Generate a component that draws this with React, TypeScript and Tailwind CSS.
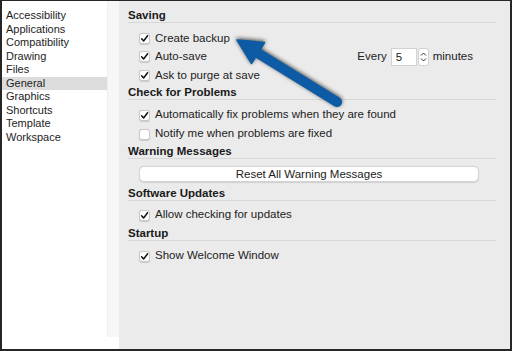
import React from 'react';

const categories = [
  'Accessibility',
  'Applications',
  'Compatibility',
  'Drawing',
  'Files',
  'General',
  'Graphics',
  'Shortcuts',
  'Template',
  'Workspace',
];

const Checkbox = ({ checked }: { checked: boolean }) => (
  <span className="w-[11px] h-[11px] shrink-0 rounded-[3px] bg-white border border-[#c9c9c9] shadow-[0_0.5px_1px_rgba(0,0,0,0.15)] flex items-center justify-center">
    {checked && (
      <svg width="9" height="9" viewBox="0 0 9 9">
        <path d="M1.6 4.8 L3.6 7 L7.6 1.8" fill="none" stroke="#111" strokeWidth="1.5" strokeLinecap="round" strokeLinejoin="round" />
      </svg>
    )}
  </span>
);

const Option = ({
  label,
  checked = true,
  tall = false,
  children,
}: {
  label: string;
  checked?: boolean;
  tall?: boolean;
  children?: React.ReactNode;
}) => (
  <div className={`${tall ? 'h-[19px]' : 'h-[18.5px]'} flex items-center pl-[11px] pr-[23px]`}>
    <Checkbox checked={checked} />
    <span className="ml-[5px] text-[11.5px] text-[#222]">{label}</span>
    {children}
  </div>
);

const Heading = ({ title, className = '' }: { title: string; className?: string }) => (
  <div className={`h-[15px] leading-[15px] text-[11.5px] font-bold text-[#1a1a1a] border-b border-[#d8d8d8] ${className}`}>
    {title}
  </div>
);

export default function App() {
  return (
    <div className="relative w-[512px] h-[351px] font-['Liberation_Sans',Arial,sans-serif]">
      <div className="w-full h-full border-x-2 border-b-2 border-t border-[#262626] flex bg-white">
        {/* Sidebar */}
        <div className="w-[117px] h-full flex bg-white">
          <div className="w-[105px] pt-[8px]">
            {categories.map((c) => (
              <div
                key={c}
                className={`h-[13.5px] leading-[13.5px] pl-[4px] text-[11px] text-[#1d1d1d] ${c === 'General' ? 'bg-[#dcdcdc]' : ''}`}
              >
                {c}
              </div>
            ))}
          </div>
          <div className="w-[12px] mb-[12px] bg-[#f7f7f7] border-l border-[#efefef]" />
        </div>

        {/* Main panel */}
        <div className="flex-1 h-full bg-[#ebebeb] pl-[9px] pr-[14px] pt-[7px]">
          <Heading title="Saving" />
          <div className="pt-[6px]">
            <Option label="Create backup" />
            <Option label="Auto-save">
              <div className="ml-auto flex items-center text-[11.5px] text-[#222]">
                <span>Every</span>
                <div className="ml-[4px] w-[26px] h-[18px] bg-white border border-[#d2d2d2] pl-[4px] leading-[16px]">5</div>
                <div className="ml-[1px] w-[11px] h-[18px] rounded-[3px] bg-white border border-[#d2d2d2] flex flex-col items-center justify-center gap-[2px]">
                  <svg width="7" height="4" viewBox="0 0 7 4">
                    <path d="M1 3.5 L3.5 1 L6 3.5" fill="none" stroke="#333" strokeWidth="1" />
                  </svg>
                  <svg width="7" height="4" viewBox="0 0 7 4">
                    <path d="M1 0.5 L3.5 3 L6 0.5" fill="none" stroke="#333" strokeWidth="1" />
                  </svg>
                </div>
                <span className="ml-[4px]">minutes</span>
              </div>
            </Option>
            <Option label="Ask to purge at save" />
          </div>

          <Heading title="Check for Problems" />
          <div className="pt-[6px]">
            <Option label="Automatically fix problems when they are found" tall />
            <Option label="Notify me when problems are fixed" checked={false} tall />
          </div>

          <Heading title="Warning Messages" />
          <div className="pt-[7px] pl-[11px] pr-[17px]">
            <button className="block w-full h-[16px] rounded-[5px] bg-white border border-[#d4d4d4] shadow-[0_0.5px_1px_rgba(0,0,0,0.12)] text-[11.5px] leading-[14px] text-[#222]">
              Reset All Warning Messages
            </button>
          </div>

          <Heading title="Software Updates" className="mt-[4px]" />
          <div className="pt-[5px]">
            <Option label="Allow checking for updates" tall />
          </div>

          <Heading title="Startup" className="mt-[1px]" />
          <div className="pt-[6px]">
            <Option label="Show Welcome Window" tall />
          </div>
        </div>
      </div>

      {/* Annotation arrow */}
      <svg
        className="absolute inset-0 pointer-events-none drop-shadow-[0_-1px_2px_rgba(0,0,0,0.7)]"
        width="512"
        height="351"
        viewBox="0 0 512 351"
      >
        <line x1="256" y1="52" x2="337" y2="102" stroke="#0d5ba5" strokeWidth="10" strokeLinecap="round" />
        <polygon points="237,40 264.5,42.5 251.5,63.5" fill="#0d5ba5" stroke="#0d5ba5" strokeWidth="1.5" strokeLinejoin="round" />
      </svg>
    </div>
  );
}
